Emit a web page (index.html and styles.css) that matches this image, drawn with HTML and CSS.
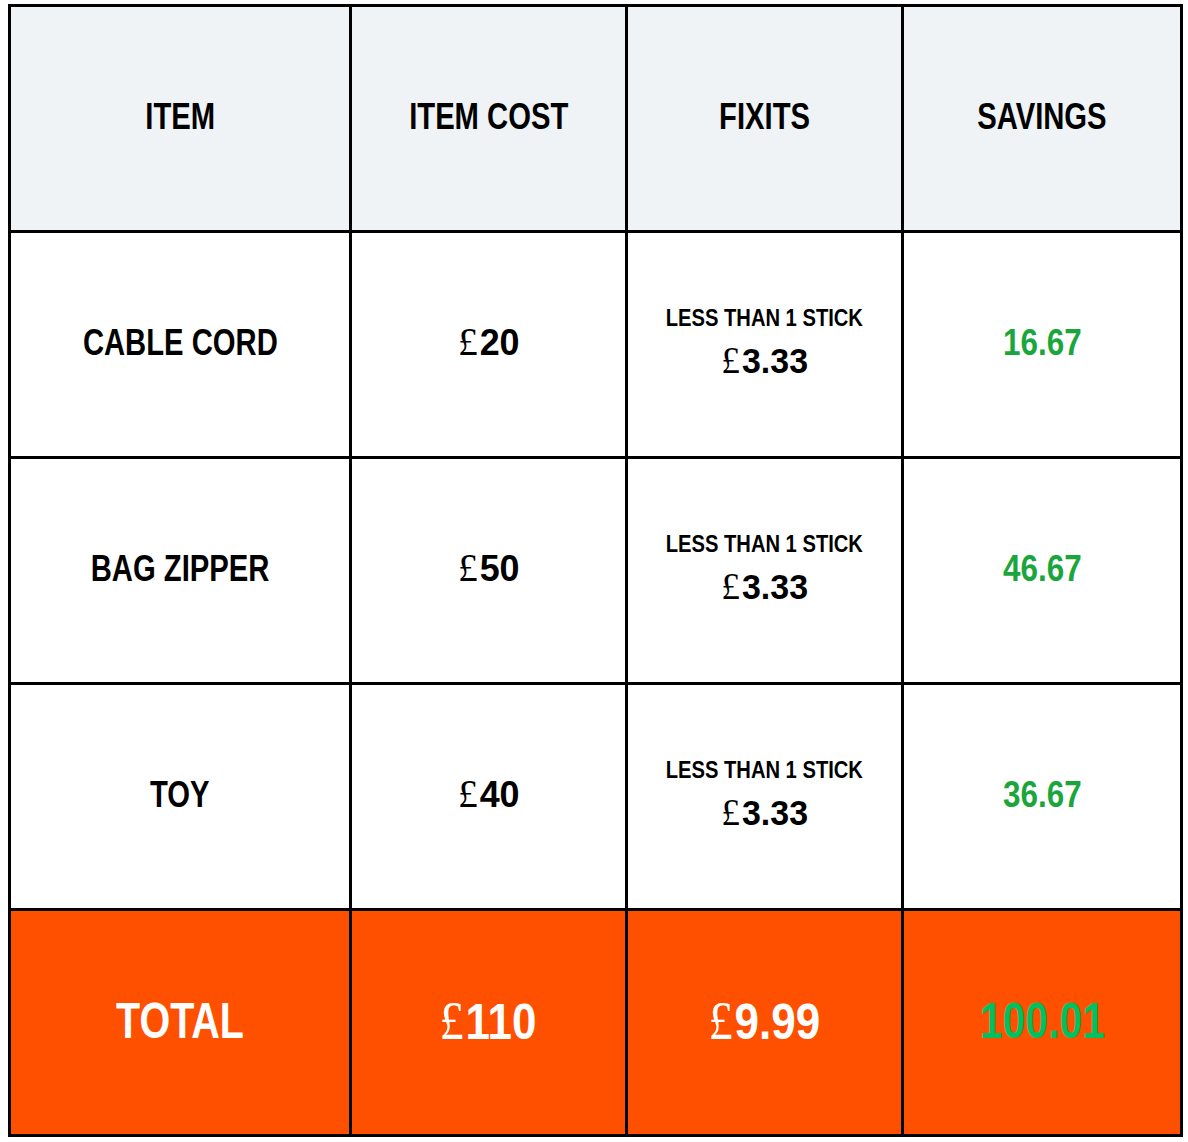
FILE: index.html
```html
<!DOCTYPE html>
<html>
<head>
<meta charset="utf-8">
<link rel="stylesheet" href="styles.css">
</head>
<body>
<table class="savings">
  <colgroup>
    <col class="c-item">
    <col class="c-cost">
    <col class="c-fix">
    <col class="c-save">
  </colgroup>
  <thead>
    <tr class="head">
      <th><span class="t">ITEM</span></th>
      <th><span class="t">ITEM COST</span></th>
      <th><span class="t">FIXITS</span></th>
      <th><span class="t">SAVINGS</span></th>
    </tr>
  </thead>
  <tbody>
    <tr>
      <td class="name"><span class="t">CABLE CORD</span></td>
      <td class="price"><span class="n"><span class="pound">£</span>20</span></td>
      <td class="fix"><div class="note"><span class="t">LESS THAN 1 STICK</span></div><div class="fixprice"><span class="n"><span class="pound">£</span>3.33</span></div></td>
      <td class="save"><span class="n">16.67</span></td>
    </tr>
    <tr>
      <td class="name"><span class="t">BAG ZIPPER</span></td>
      <td class="price"><span class="n"><span class="pound">£</span>50</span></td>
      <td class="fix"><div class="note"><span class="t">LESS THAN 1 STICK</span></div><div class="fixprice"><span class="n"><span class="pound">£</span>3.33</span></div></td>
      <td class="save"><span class="n">46.67</span></td>
    </tr>
    <tr>
      <td class="name"><span class="t">TOY</span></td>
      <td class="price"><span class="n"><span class="pound">£</span>40</span></td>
      <td class="fix"><div class="note"><span class="t">LESS THAN 1 STICK</span></div><div class="fixprice"><span class="n"><span class="pound">£</span>3.33</span></div></td>
      <td class="save"><span class="n">36.67</span></td>
    </tr>
    <tr class="total">
      <td><span class="t">TOTAL</span></td>
      <td><span class="n"><span class="pound">£</span>110</span></td>
      <td><span class="n"><span class="pound">£</span>9.99</span></td>
      <td class="tsave"><span class="n">100.01</span></td>
    </tr>
  </tbody>
</table>
</body>
</html>
```
FILE: styles.css
```css
html, body {
  margin: 0;
  padding: 0;
  background: #ffffff;
}
body {
  padding: 4px 8px 0 8px;
  font-family: "Liberation Sans", Arial, sans-serif;
  font-weight: bold;
  color: #000;
}
.savings {
  width: 1172px;
  border-collapse: collapse;
  table-layout: fixed;
  border: 3px solid #000;
}
.c-item { width: 341px; }
.c-cost { width: 276px; }
.c-fix { width: 276px; }
.c-save { width: 279px; }
.savings th, .savings td {
  border: 3px solid #000;
  text-align: center;
  vertical-align: middle;
  height: 219px;
  padding: 0 0 4px 0;
  font-size: 37px;
  line-height: 1;
}
.t, .n {
  display: inline-block;
  transform-origin: center;
}
.t {
  transform: scaleX(0.79);
}
.n {
  transform: scaleX(0.9);
}
.price .n,
.fixprice .n {
  transform: scaleX(0.97);
}
.head th {
  background: #eff3f6;
  font-weight: bold;
}
.pound {
  font-weight: normal;
  font-family: "Liberation Serif", serif;
  font-size: 1.1em;
  margin-right: 2px;
}
.fix .note {
  font-size: 24px;
  margin-bottom: 11px;
}
.fix .note .t {
  transform: scaleX(0.84);
}
.fix .fixprice {
  font-size: 35px;
}
.save {
  color: #1aa63c;
}
.save .n {
  transform: scaleX(0.85);
}
.total td {
  background: #ff5000;
  color: #fff;
  font-size: 50px;
}
.total .n {
  transform: scaleX(0.88);
}
.total .tsave {
  color: #00c060;
}
.total .tsave .n {
  transform: scaleX(0.82);
}
```
